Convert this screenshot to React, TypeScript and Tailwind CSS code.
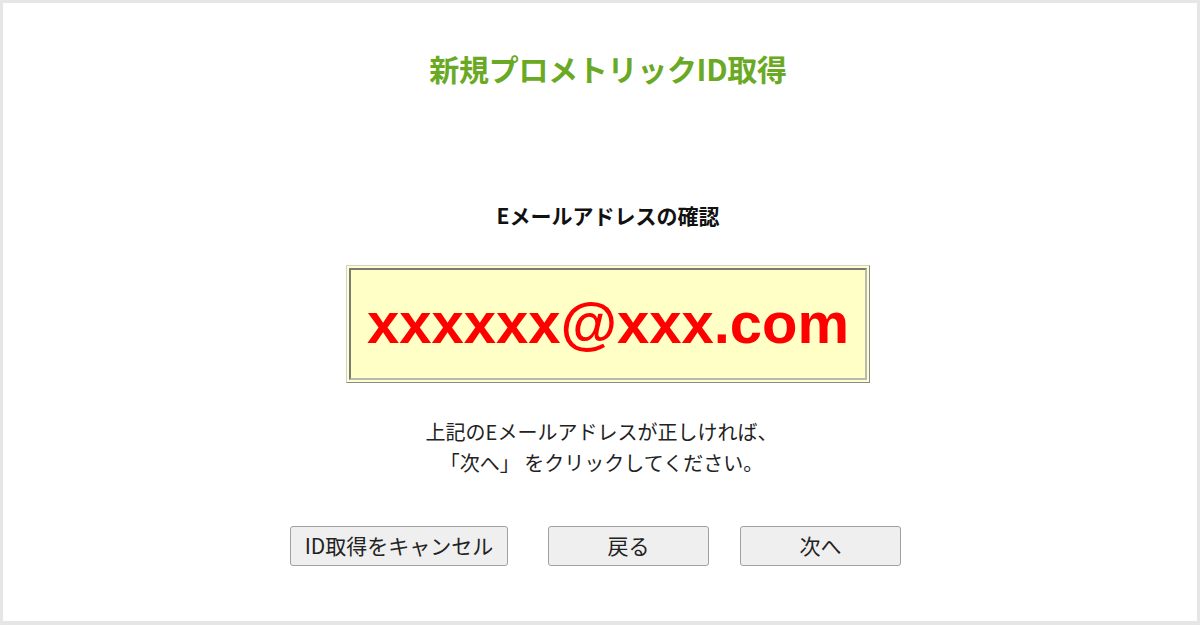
import React from "react";

const jp = { fontFamily: '"Noto Sans CJK JP", "Noto Sans", sans-serif' };

export default function App() {
  return (
    <div className="w-[1200px] h-[625px] bg-[#e6e6e6] p-[3px] pb-[4px]" style={jp}>
      <div className="w-full h-full bg-white flex flex-col items-center pl-[16px] pt-[45px]">
        <h1 className="text-[30px] leading-[40px] font-bold text-[#6aa924] tracking-[-0.3px]">
          新規プロメトリックID取得
        </h1>
        <h2 className="mt-[112px] text-[21px] leading-[30px] font-bold text-[#111]">
          Eメールアドレスの確認
        </h2>
        <div className="mt-[35px] w-[524px] h-[118px] border border-t-[#d0d0d0] border-l-[#d0d0d0] border-b-[#8a8a8a] border-r-[#8a8a8a] bg-[#ffffc6] p-[2px]">
          <div className="w-full h-full border-2 border-t-[#7a7a7a] border-l-[#7a7a7a] border-b-[#b8b8b8] border-r-[#b8b8b8] flex items-center justify-center">
            <span
              className="text-[58px] font-bold text-[#ff0000] leading-none pb-[2px]"
              style={{ fontFamily: '"Liberation Sans", Arial, sans-serif' }}
            >
              xxxxxx@xxx.com
            </span>
          </div>
        </div>
        <p className="mt-[33px] pr-[13px] text-center text-[20px] leading-[31px] text-[#222]">
          上記のEメールアドレスが正しければ、
          <br />
          「次へ」&nbsp;をクリックしてください。
        </p>
        <div className="mt-[48px] pr-[25px] flex items-center">
          <button className="w-[218px] h-[40px] bg-[#efefef] border border-[#a0a0a0] rounded-[3px] text-[21px] text-[#222] flex items-center justify-center">
            ID取得をキャンセル
          </button>
          <button className="ml-[40px] w-[161px] h-[40px] bg-[#efefef] border border-[#a0a0a0] rounded-[3px] text-[21px] text-[#222] flex items-center justify-center">
            戻る
          </button>
          <button className="ml-[31px] w-[161px] h-[40px] bg-[#efefef] border border-[#a0a0a0] rounded-[3px] text-[21px] text-[#222] flex items-center justify-center">
            次へ
          </button>
        </div>
      </div>
    </div>
  );
}
